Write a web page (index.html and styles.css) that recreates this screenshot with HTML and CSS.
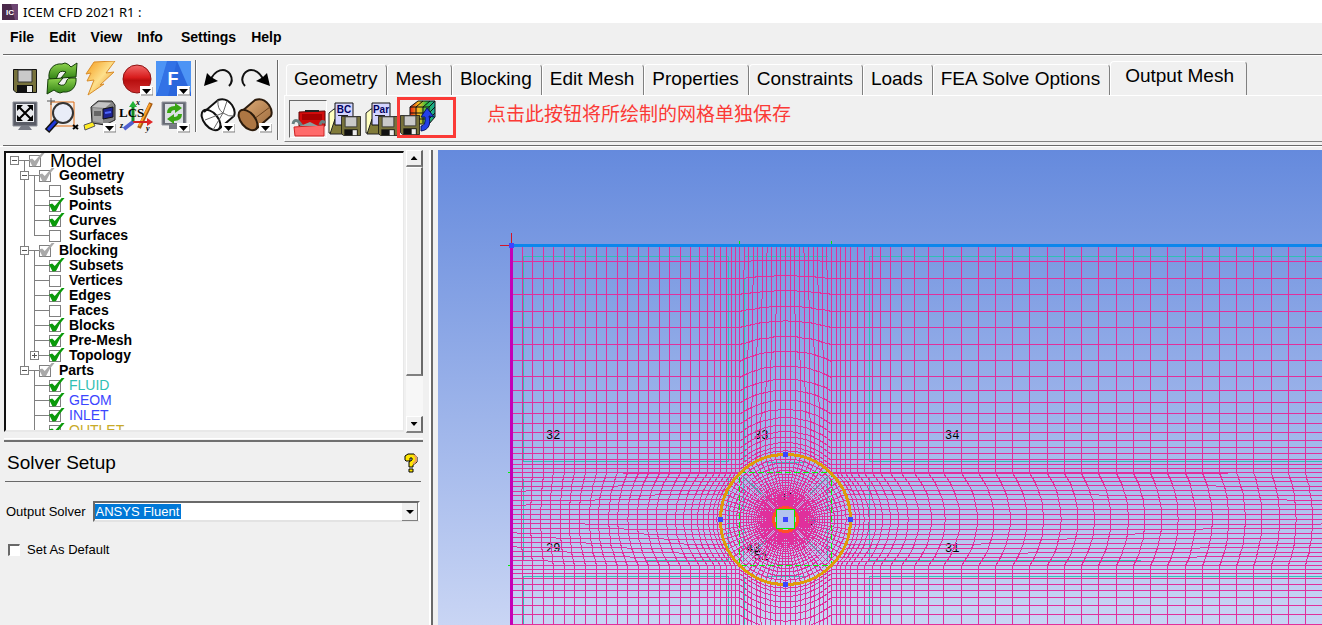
FILE: index.html
```html
<!DOCTYPE html>
<html lang="en">
<head>
<meta charset="utf-8">
<title>ICEM CFD 2021 R1</title>
<link rel="stylesheet" href="styles.css">
</head>
<body>
<svg class="defs" aria-hidden="true">
  <defs>
    <linearGradient id="ball" x1="0" y1="0" x2="0" y2="1"><stop offset="0" stop-color="#f26a6a"/><stop offset=".45" stop-color="#d81c1c"/><stop offset=".55" stop-color="#b80f0f"/><stop offset="1" stop-color="#d03030"/></linearGradient>
    <linearGradient id="leaf" x1="0" y1="0" x2="0" y2="1"><stop offset="0" stop-color="#8fd44e"/><stop offset="1" stop-color="#2c7d12"/></linearGradient>
    <linearGradient id="bolt" x1="0" y1="0" x2="1" y2="1"><stop offset="0" stop-color="#f59a18"/><stop offset=".5" stop-color="#fde08c"/><stop offset="1" stop-color="#e07808"/></linearGradient>
    <linearGradient id="wood" x1="0" y1="0" x2="1" y2="1"><stop offset="0" stop-color="#e0ad78"/><stop offset="1" stop-color="#99673a"/></linearGradient>
    <linearGradient id="rainbow" x1="0" y1="0" x2="1" y2="0"><stop offset="0" stop-color="#e82010"/><stop offset=".35" stop-color="#f8c020"/><stop offset=".65" stop-color="#30c040"/><stop offset="1" stop-color="#18a8a0"/></linearGradient>
    <symbol id="drop" viewBox="0 0 13 10"><path d="M0 0h13v10H0z" fill="#fff"/><path d="M1 9h12V1" fill="none" stroke="#777"/><path d="M2 3h9L6.500 8z" fill="#000"/></symbol>
    <symbol id="disk" viewBox="0 0 24 24"><path d="M.5.5h23v23H3L.5 21z" fill="#77723c" stroke="#111"/><path d="M5 1h14v12H5z" fill="#c9c9c9" stroke="#333"/><path d="M4 16h16v7H4z" fill="#111"/><path d="M14 17h5v6h-5z" fill="#eee"/></symbol>
    <symbol id="page" viewBox="0 0 36 36"><path d="M1 12l5-4h5v9l-5 15H1z" fill="#ffffc0" stroke="#222"/><path d="M7 18h24v15H2z" fill="#817b3a" stroke="#222"/><path d="M7 2h18v22H7z" fill="#d4d4ff" stroke="#111"/><path d="M10 14.500h10" stroke="#222"/></symbol>
  </defs>
</svg>

<header class="titlebar">
  <svg class="logo" viewBox="0 0 16 16"><path d="M0 0h16v16H0z" fill="#4b2a4b"/><path d="M9 0h7v16h-3z" fill="#6d4572"/><text x="8" y="11" text-anchor="middle">IC</text></svg>
  <span>ICEM CFD 2021 R1 :</span>
</header>

<nav class="menubar" aria-label="Main menu">
  <button>File</button><button>Edit</button><button>View</button><button>Info</button><button class="wide">Settings</button><button>Help</button>
</nav>

<div class="ribbon">
  <div class="tools five">
    <button aria-label="Save"><svg viewBox="0 0 36 36"><use href="#disk" x="6" y="8" width="24" height="24"/></svg></button>
    <button aria-label="Refresh"><svg viewBox="0 0 36 36"><path d="M5 17C4 8 10 2 18 3l3-1q4 1 6 4l6-4-1 14-15 1 5-6q-7-3-9 5 0 3-4 3z" fill="url(#leaf)" stroke="#143c08"/><path d="M32 17c1 9-5 15-13 14l-3 1q-4-1-6-3l-7 4 1-15 15-1-5 6q7 4 9-4 1-2 4-2z" fill="url(#leaf)" stroke="#143c08"/></svg></button>
    <button aria-label="Compute"><svg viewBox="0 0 36 36"><path d="M13 1l21-1-9 12 8-1-14 13 4-1L7 34l6-15-7 1 4-8-5 1z" fill="url(#bolt)" stroke="#d98d2a"/></svg></button>
    <button aria-label="Stop"><svg viewBox="0 0 36 36"><circle cx="19" cy="18" r="14" fill="url(#ball)" stroke="#8d1212"/><use href="#drop" x="22" y="25" width="13" height="10"/></svg></button>
    <button aria-label="Fluent"><svg viewBox="0 0 36 36"><path d="M1 0h35v35H1z" fill="#2a66dc"/><path d="M1 0h12L3 30l-2 5z" fill="#4d94f5"/><path d="M12 0h10L13 35H2z" fill="#3272e6"/><path d="M22 0h14v32z" fill="#4d94f5"/><text class="f-mark" x="18" y="24" text-anchor="middle">F</text><use href="#drop" x="22" y="25" width="13" height="10"/></svg></button>
    <button aria-label="Fit window"><svg viewBox="0 0 36 36"><path d="M6 4h24v24H6z" fill="#595c66" stroke="#8c8f98"/><path d="M9 6h18v18H9z" fill="#e8eaee"/><path d="M14 28h8l3 4H11z" fill="#777a84"/><path d="M11 8l14 14M25 8L11 22" stroke="#000" stroke-width="2"/><path d="M10 7h6l-6 6zM26 7v6l-6-6zM10 23v-6l6 6zM26 23h-6l6-6z"/></svg></button>
    <button aria-label="Zoom box"><svg viewBox="0 0 36 36"><path d="M7 4h23v24H7z" fill="none" stroke="#e06a10"/><path d="M7 0v7M3 3h8" stroke="#555"/><path d="M13 22L3 33" stroke="#111" stroke-width="6"/><path d="M12 23L4 32" stroke="#2038d8" stroke-width="3"/><circle cx="19" cy="15" r="10" fill="#e9edf8" stroke="#333" stroke-width="2"/><path d="M29 27l5 4M34 27l-5 4" stroke="#000" stroke-width="2"/></svg></button>
    <button aria-label="Measure"><svg viewBox="0 0 36 36"><path d="M10 9l7-6 14 0 3 4v15l-10 5-13-2z" fill="#858585" stroke="#222"/><path d="M11 9l7-5 12 1-6 5z" fill="#c4c4c4"/><path d="M12 10l10 1v14l-10-2z" fill="#a5a5a5"/><path d="M13 13h7v5h-7z" fill="#666"/><path d="M22 11l10-2v10l-10 2z" fill="#1c2290" stroke="#111"/><path d="M24 15l6-1" stroke="#4e68ff" stroke-width="2"/><path d="M3 27l9-3 2 4-10 4z" fill="#ffec22" stroke="#555"/><use href="#drop" x="22" y="25" width="13" height="10"/></svg></button>
    <button aria-label="Local coordinate system"><svg viewBox="0 0 36 36"><path d="M33 5L21 30" stroke="#a75b10" stroke-width="4"/><path d="M32 6L21 28" stroke="#ffa42a" stroke-width="2"/><path d="M15 24V6" stroke="#128b22" stroke-width="3"/><path d="M11 9l4-6 4 6z" fill="#22b238"/><path d="M15 24h15" stroke="#d42020" stroke-width="2"/><path d="M29 20l6 4-6 4z" fill="#e02828"/><path d="M15 24l-9 7" stroke="#5060d0" stroke-width="4"/><text class="lcs" x="1" y="19">LCS</text><text class="axis" x="18" y="7">x</text><text class="axis" x="2" y="30">z</text><text class="axis" x="28" y="33">y</text></svg></button>
    <button aria-label="Refresh view"><svg viewBox="0 0 36 36"><path d="M7 4h24v23H7z" fill="#666a74" stroke="#94979f"/><path d="M10 6h18v19H10z" fill="#dce0e4"/><path d="M14 27h8v4h-8z" fill="#777a84"/><path d="M12 15q0-7 8-7V5l7 5-7 5v-3q-4 0-4 3zM27 16q0 7-8 7v3l-7-5 7-5v3q4 0 4-3z" fill="#38a512"/><use href="#drop" x="22" y="25" width="13" height="10"/></svg></button>
  </div>
  <div class="tools two">
    <button aria-label="Undo"><svg viewBox="0 0 36 36"><path d="M10 20C15 8 25 6 30 13q4 7-1 12" fill="none" stroke="#111" stroke-width="2"/><path d="M4 25L7 12l4 4 7 4z"/></svg></button>
    <button aria-label="Redo"><svg viewBox="0 0 36 36"><path d="M27 20C22 8 12 6 7 13q-4 7 1 12" fill="none" stroke="#111" stroke-width="2"/><path d="M33 25L30 12l-4 4-7 4z"/></svg></button>
    <button aria-label="Wireframe"><svg viewBox="0 0 36 36"><path d="M4 14L18 2q8-3 14 5 4 6 2 11L19 31 9 32 3 22z" fill="#fff"/><ellipse cx="11" cy="22" rx="7" ry="12" transform="rotate(-40 11 22)" fill="none" stroke="#111" stroke-width="2"/><path d="M4 14L18 2q8-3 14 5 4 6 2 11L19 31" fill="none" stroke="#111" stroke-width="2"/><path d="M18 2q-1 9 5 13t11 3M5 22l18-7 4-12M13 32l10-17" fill="none" stroke="#666"/><use href="#drop" x="22" y="25" width="13" height="10"/></svg></button>
    <button aria-label="Solid display"><svg viewBox="0 0 36 36"><path d="M4 14L18 2q8-3 14 5 4 6 2 11L19 31z" fill="url(#wood)" stroke="#2c1b0c" stroke-width="2"/><path d="M17 21L33 9" stroke="#6b431f"/><ellipse cx="11" cy="22" rx="7" ry="12" transform="rotate(-40 11 22)" fill="#ad7643" stroke="#2c1b0c" stroke-width="2"/><use href="#drop" x="22" y="25" width="13" height="10"/></svg></button>
  </div>
  <div class="tabs">
    <div class="tablist" role="tablist">
      <button role="tab">Geometry</button><button role="tab">Mesh</button><button role="tab">Blocking</button><button role="tab">Edit Mesh</button><button role="tab">Properties</button><button role="tab">Constraints</button><button role="tab">Loads</button><button role="tab">FEA Solve Options</button><button role="tab" aria-selected="true">Output Mesh</button>
    </div>
    <div class="panel" role="tabpanel">
      <button class="pressed" aria-label="Select solver"><svg viewBox="0 0 36 36"><path d="M9 11l26-1v15H9z" fill="#d20c0c" stroke="#5c0606"/><path d="M12 13h20v6H12z" fill="#a80000"/><path d="M15 10h14" stroke="#222" stroke-width="2"/><path d="M3 23q1-5 5-3l5 6M30 24q2-6 5-2" fill="none" stroke="#698080" stroke-width="3"/><path d="M4 26l30-2v11H5z" fill="#ff6b6b" stroke="#c22"/><path d="M10 25l10-4 8 4z" fill="#8d9e9e"/></svg></button>
      <button aria-label="Boundary conditions"><svg viewBox="0 0 36 36"><use href="#page" width="36" height="36"/><text class="tag" x="16" y="12" text-anchor="middle">BC</text><use href="#disk" x="13" y="15" width="20" height="20"/></svg></button>
      <button aria-label="Parameters"><svg viewBox="0 0 36 36"><use href="#page" width="36" height="36"/><text class="tag" x="16" y="12" text-anchor="middle">Par</text><use href="#disk" x="13" y="15" width="20" height="20"/></svg></button>
      <button class="marked" aria-label="Write input"><svg viewBox="0 0 36 36"><path d="M10 7l8-6h17v16l-6 7H10z" fill="url(#rainbow)" stroke="#111"/><path d="M10 7h19l6-6M29 7v17M16 7v16M23 7v16M10 13h19l6-6M10 19h19l6-6M16 7l7-6M23 7l7-6" fill="none" stroke="#111"/><path d="M21 31c8-1 10-7 8-15l5 1-7-9-6 9h4q1 9-4 9z" fill="#2340e8" stroke="#0a1560"/><use href="#disk" x="0" y="15" width="20" height="20"/></svg></button>
      <span class="note" lang="zh">点击此按钮将所绘制的网格单独保存</span>
    </div>
  </div>
</div>

<main class="workspace">
  <aside class="side">
    <div class="treebox">
      <ul class="tree" id="tree"></ul>
      <div class="scroll">
        <button class="up" aria-label="Scroll up"></button>
        <div class="thumb"></div>
        <button class="down" aria-label="Scroll down"></button>
      </div>
    </div>
    <section class="setup">
      <div class="head">
        <h2>Solver Setup</h2>
        <button aria-label="Help"><svg viewBox="0 0 14 20"><path d="M1 7V3l3-2h6l3 3v5l-4 3v2H5V9l3-2V5H6v3H2z" fill="#ffe600" stroke="#000"/><path d="M10 2l2 2v4l-3 3" fill="none" stroke="#e8a060" stroke-width="2"/><path d="M5 16h4v3H5z" fill="#ffe600" stroke="#000"/></svg></button>
      </div>
      <div class="field">
        <label for="solver">Output Solver</label>
        <span class="combo"><select id="solver"><option>ANSYS Fluent</option></select></span>
      </div>
      <label class="default"><input type="checkbox"> Set As Default</label>
    </section>
  </aside>
  <div class="view"><svg id="mesh" role="img" aria-label="Mesh view"></svg></div>
</main>
<script src="app.js"></script>
</body>
</html>
```

FILE: styles.css
```css
* { box-sizing: border-box; }
body {
  margin: 0;
  height: 100vh;
  display: flex;
  flex-direction: column;
  overflow: hidden;
  background: #f0f0f0;
  color: #000;
  font-family: "Liberation Sans", Arial, sans-serif;
  font-size: 13px;
}
button { border: 0; padding: 0; background: none; color: inherit; font: inherit; }
svg { display: block; }
.defs { position: absolute; width: 0; height: 0; }

.titlebar {
  display: flex;
  align-items: center;
  gap: 5px;
  height: 23px;
  padding-left: 2px;
  background: #fff;
  font: 13px "Noto Sans", sans-serif;
}
.logo { width: 16px; height: 16px; }
.logo text { fill: #fff; font: bold 8px "Liberation Sans", sans-serif; }

.menubar {
  display: flex;
  gap: 15px;
  height: 32px;
  margin-left: 3px;
  padding: 0 10px 3px 7px;
  border-bottom: 1px solid #696969;
  font-size: 14px;
  font-weight: bold;
}
.menubar .wide { margin-left: 3px; }

.ribbon {
  display: flex;
  flex: none;
  height: 91px;
  margin-left: 3px;
  border-top: 1px solid #fff;
  border-bottom: 1px solid #696969;
}
.tools {
  display: grid;
  grid-auto-rows: 37px;
  align-content: start;
  padding: 4px 0 0 4px;
  position: relative;
}
.tools.five { grid-template-columns: repeat(5, 37px); }
.tools.two { grid-template-columns: repeat(2, 37px); padding-left: 8px; }
.tools svg, .panel svg { width: 36px; height: 36px; }
.tools::after {
  content: "";
  position: absolute;
  right: -5px;
  top: 4px;
  height: 72px;
  border-left: 1px solid #696969;
  border-right: 1px solid #fff;
}
.tools.two::after { height: 80px; }
.f-mark { fill: #fff; font: bold 18px "Liberation Sans", sans-serif; }
.lcs { font: bold 13px "Liberation Serif", serif; }
.axis { font: italic bold 8px "Liberation Serif", serif; }
.tag { fill: #000060; font: bold 10px "Liberation Sans", sans-serif; }

.tabs { flex: 1; min-width: 0; display: flex; flex-direction: column; padding: 5px 0 3px 10px; }
.tablist { display: flex; align-items: flex-end; height: 34px; padding-left: 2px; }
.tablist button {
  height: 31px;
  padding: 0 9px 2px 7px;
  border: 1px solid #fff;
  border-bottom: 0;
  border-right-color: #808080;
  border-radius: 4px 4px 0 0;
  font-size: 19px;
  white-space: nowrap;
}
.tablist [aria-selected] { height: 34px; padding: 0 12px 5px 14px; background: #f0f0f0; }
.panel {
  flex: 1;
  display: flex;
  align-items: center;
  gap: 1px;
  padding-left: 4px;
  border: 1px solid #fff;
  border-right: 0;
  border-bottom: 1px solid #808080;
}
.panel .pressed { border: 1px solid #fff; border-top-color: #696969; border-left-color: #696969; }
.panel .marked { width: 59px; height: 41px; margin: -3px 0 0 -5px; border: 3px solid #fb3a36; }
.note { margin-left: 30px; margin-top: -13px; color: #fb3a36; font: 19px "Noto Sans CJK SC", sans-serif; }

.workspace { flex: 1; min-height: 0; display: flex; padding-top: 3px; border-top: 1px solid #fff; }
.side { width: 433px; flex: none; padding-left: 4px; padding-right: 8px; border-right: 2px solid #696969; box-shadow: inset -2px 0 #fff; }
.view { flex: 1; min-width: 0; margin-left: 5px; overflow: hidden; background: linear-gradient(#658add, #c9d5f4); }

.treebox { display: flex; gap: 2px; height: 283px; }
.tree {
  flex: 1;
  margin: 1px 0;
  padding: 0;
  overflow: hidden;
  background: #fff;
  border: 2px solid #696969;
  border-color: #111 #e8e8e8 #e8e8e8 #111;
  border-right-width: 1px;
}
.tree ul { margin: 0; padding: 0 0 0 10px; }
.tree > li { padding-left: 4px; }
.tree li { position: relative; list-style: none; }
.tree li li::before {
  content: "";
  position: absolute;
  left: 4px;
  top: -8px;
  bottom: 0;
  border-left: 1px solid #808080;
}
.tree li li:last-child::before { bottom: auto; height: 16px; }
.row { display: flex; align-items: center; height: 15px; }
.slot { position: relative; width: 19px; height: 15px; flex: none; }
.slot::before { content: ""; position: absolute; left: 5px; right: 0; top: 7px; border-top: 1px solid #808080; }
.slot button { position: absolute; left: 0; top: 3px; width: 9px; height: 9px; background: #fff; border: 1px solid #808080; }
.slot button::before, .slot .plus::after { content: ""; position: absolute; left: 1px; top: 3px; width: 5px; height: 1px; background: #555; }
.slot .plus::after { left: 3px; top: 1px; width: 1px; height: 5px; }
.row label { display: flex; align-items: center; gap: 8px; line-height: 15px; font-size: 14px; font-weight: bold; white-space: nowrap; }
.row .root { font-size: 19px; font-weight: normal; gap: 9px; }
.row .part { font-weight: normal; }
.row input, .default input {
  appearance: none;
  position: relative;
  flex: none;
  width: 12px;
  height: 12px;
  margin: 0;
  border: 1px solid #808080;
  background: #fff;
}
.row input:checked::before {
  content: "";
  position: absolute;
  left: -1px;
  top: -3px;
  width: 16px;
  height: 14px;
  background: #0a9a0a;
  clip-path: polygon(0 50%, 20% 42%, 36% 60%, 82% 0, 100% 0, 68% 44%, 44% 96%, 22% 100%);
}
.row .grey:checked::before { background: #aaa; }

.scroll { width: 17px; display: flex; flex-direction: column; background: #f7f7f7; }
.scroll > * { border: 1px solid #fff; border-right: 2px solid #696969; border-bottom: 2px solid #808080; background: #f0f0f0; }
.scroll button { height: 17px; display: flex; align-items: center; justify-content: center; }
.scroll button::before { content: ""; width: 7px; height: 4px; background: #000; clip-path: polygon(50% 0, 100% 100%, 0 100%); }
.scroll .down { margin-top: auto; }
.scroll .down::before { clip-path: polygon(0 0, 100% 0, 50% 100%); }
.thumb { height: 209px; }

.setup { margin-top: 5px; border-top: 1px solid #fff; }
.setup::before { content: ""; display: block; border-top: 2px solid #707070; margin-top: 1px; }
.head { display: flex; justify-content: space-between; align-items: center; height: 40px; margin: 0 2px 0 1px; padding: 2px 3px 0 2px; border-bottom: 1px solid #696969; }
.head h2 { margin: 0; font-size: 19px; font-weight: normal; }
.head svg { width: 14px; height: 20px; }
.field { display: flex; align-items: center; gap: 7px; margin: 19px 3px 0 2px; }
.combo { position: relative; flex: 1; }
.combo::after { content: ""; position: absolute; right: 2px; top: 2px; width: 15px; height: 17px; border-right: 1px solid #808080; border-bottom: 1px solid #808080; background: #f0f0f0; pointer-events: none; }
.combo::before { content: ""; position: absolute; z-index: 1; right: 6px; top: 9px; width: 8px; height: 4px; background: #000; clip-path: polygon(0 0, 100% 0, 50% 100%); pointer-events: none; }
.combo select {
  appearance: none;
  display: block;
  width: 100%;
  height: 21px;
  padding: 0 18px 0 1px;
  border: 2px solid #696969;
  border-right-color: #fff;
  border-bottom-color: #e3e3e3;
  border-radius: 0;
  background: #fff linear-gradient(#0078d7, #0078d7) no-repeat 0 1px / 86px 15px;
  color: #fff;
  font: inherit;
}
.default { display: flex; align-items: center; gap: 7px; margin: 20px 0 0 4px; }
.default input { border-width: 2px 1px 1px 2px; border-color: #696969 #fff #fff #696969; }

#mesh { width: 100%; height: 100%; shape-rendering: crispEdges; }
#mesh path, #mesh circle.ring { fill: none; }
#mesh .grid { stroke: #e0309c; }
#mesh .block { stroke: #30c0b4; }
#mesh .edge { stroke: #00f000; }
#mesh .dash { stroke-dasharray: 6 3; }
#mesh .wall { stroke: #e09a0a; stroke-width: 3; }
#mesh .core { stroke: #ff5028; stroke-width: 3; }
#mesh .hub { fill: #b4c4ee; stroke: #00f000; }
#mesh .top { stroke: #0c86ec; stroke-width: 3; }
#mesh .inlet { stroke: #c400b8; stroke-width: 3; }
#mesh .cross { stroke: #d41428; }
#mesh .node { fill: #3c46ff; }
#mesh text { font: 12px "Liberation Mono", monospace; }
```

FILE: app.js
```js
// Model tree: [label, state, children, colour]
const tree = ["Model", "grey", [
  ["Geometry", "grey", [["Subsets", ""], ["Points", "on"], ["Curves", "on"], ["Surfaces", ""]]],
  ["Blocking", "grey", [["Subsets", "on"], ["Vertices", ""], ["Edges", "on"], ["Faces", ""], ["Blocks", "on"], ["Pre-Mesh", "on"], ["Topology", "on", []]]],
  ["Parts", "grey", [["FLUID", "on", null, "#30c0b4"], ["GEOM", "on", null, "#3c46ff"], ["INLET", "on", null, "#3c46ff"], ["OUTLET", "on", null, "#c8aa28"]]]
]];

function branch([name, state, kids, color], depth) {
  const toggle = kids ? `<button class="${kids.length ? "minus" : "plus"}" aria-label="Toggle ${name}"></button>` : "";
  const cls = depth === 0 ? "root" : color ? "part" : "";
  const tint = color ? ` style="color:${color}"` : "";
  const box = `<input type="checkbox"${state ? " checked" : ""}${state === "grey" ? ' class="grey"' : ""}>`;
  const list = kids && kids.length ? `<ul>${kids.map(k => branch(k, depth + 1)).join("")}</ul>` : "";
  return `<li><div class="row"><span class="slot">${toggle}</span><label class="${cls}"${tint}>${box}${name}</label></div>${list}</li>`;
}
document.getElementById("tree").innerHTML = branch(tree, 0);

// Mesh: structured blocks around a circular O-grid
const left = [511, 522, 532, 543, 553, 564, 574, 585, 596, 606, 617, 627, 638, 648, 659, 669, 680, 690, 699, 707, 714, 720, 726, 731, 735, 739];
const right = [831, 836, 840, 845, 850, 857, 864, 872, 880, 890, 901, 914, 928, 943, 961, 978, 995, 1012, 1029, 1047, 1064, 1081, 1098, 1116, 1133, 1150, 1167, 1185, 1202, 1219, 1236, 1253, 1271, 1288, 1305, 1322, 1339];
const upper = [245, 261, 278, 294, 311, 327, 344, 360, 376, 390, 402, 413, 423, 432, 440, 447, 453, 459, 464, 468, 472];
const lower = [565, 569, 573, 578, 584, 590, 597, 605, 614, 624, 635, 648, 662];
const cx = 785, cy = 519, R = 65, N = 20, farX = 1590, farY = 790;
const line = pts => "M" + pts.map(p => Math.round(p[0]) + " " + Math.round(p[1])).join("L");
const arc = i => (i / N - 0.5) * Math.PI / 2;
const steps = [...Array(N + 1).keys()];
const paths = [];

for (const ys of [upper, lower]) for (const xs of [left, right]) {
  const x0 = xs[0], x1 = xs[xs.length - 1], y0 = ys[0], y1 = ys[ys.length - 1];
  xs.forEach(x => paths.push(line([[x, y0], [x, y1]])));
  ys.forEach(y => paths.push(line([[x0, y], [x1, y]])));
}

function block(levels, node) {
  const pts = levels.map(l => steps.map(i => node(l, i)));
  pts.forEach(p => paths.push(line(p)));
  steps.forEach(i => paths.push(line(pts.map(p => p[i]))));
}
const mix = (a, b, t) => a + (b - a) * t;
block(upper, (y, i) => {
  const t = (y - 245) / 227;
  return [mix(739 + 4.6 * i, cx + R * Math.sin(arc(i)), t), mix(245, cy - R * Math.cos(arc(i)), t)];
});
block(lower, (y, i) => {
  const t = 1 - (y - 565) / (farY - 565);
  return [mix(739 + 4.6 * i, cx + R * Math.sin(arc(i)), t), mix(farY, cy + R * Math.cos(arc(i)), t)];
});
block(left, (x, i) => {
  const t = (x - 511) / 228;
  return [mix(511, cx - R * Math.cos(arc(i)), t), mix(472 + 4.65 * i, cy + R * Math.sin(arc(i)), t)];
});
block(right, (x, i) => {
  const t = 1 - (x - 831) / (farX - 831);
  return [mix(farX, cx + R * Math.cos(arc(i)), t), mix(472 + 4.65 * i, cy + R * Math.sin(arc(i)), t)];
});

// O-grid rings shrink towards the hub
for (let r = R, d = 4.5; r > 13; r -= d, d = Math.max(1, d * 0.93)) {
  paths.push(line([...Array(81).keys()].map(k => [cx + r * Math.cos(k * Math.PI / 40), cy + r * Math.sin(k * Math.PI / 40)])));
}
for (let k = 0; k < 80; k++) {
  const a = k * Math.PI / 40;
  paths.push(line([[cx + 13 * Math.cos(a), cy + 13 * Math.sin(a)], [cx + R * Math.cos(a), cy + R * Math.sin(a)]]));
}

const teal = "M523 461V256H728V461H523M744 461V278M744 256H827M869 461V256H1330M869 461H1330" +
  "M523 478V560M645 477H728V560H645M1140 477H869V560H1140M523 640V576H728V640M744 576V640M869 640V576H1330" +
  "M743 476L768 500M827 476L804 500M743 561L768 537M827 561L804 537M743 476V561M827 476V561M762 462H806M762 576H806";
const nodes = [[511, 245], [785, 454], [720, 519], [850, 519], [785, 584], [785, 519]];
const labels = [["32", 546, 439], ["33", 754, 439], ["34", 945, 439], ["29", 546, 552], ["31", 945, 552], ["43", 746, 552], ["51", 754, 560], ["0", 808, 525], ["30", 779, 502]];

document.getElementById("mesh").innerHTML = `<g transform="translate(-438 -150)">
  <path class="block" transform="translate(.5 .5)" d="${teal}"/>
  ${labels.map(([t, x, y]) => `<text x="${x}" y="${y}">${t}</text>`).join("")}
  <path class="grid" transform="translate(.5 .5)" d="${paths.join("")}"/>
  <path class="edge dash" transform="translate(.5 .5)" d="M739 472H831V565H739Z"/>
  <path class="edge" transform="translate(.5 .5)" d="M739 240V244M831 240V244M507 472H510M507 565H510"/>
  <circle class="ring wall" cx="785.5" cy="519.5" r="65"/>
  <circle class="ring core" cx="785.5" cy="519.5" r="12"/>
  <rect class="hub" x="776.5" y="509.5" width="18" height="19"/>
  <path class="inlet" d="M511.500 247V640"/>
  <path class="top" d="M512 245.500H1340"/>
  <path class="cross" d="M500 245.500H511M511.500 233V245"/>
  ${nodes.map(([x, y]) => `<rect class="node" x="${x - 2}" y="${y - 2}" width="5" height="5"/>`).join("")}
</g>`;
```
